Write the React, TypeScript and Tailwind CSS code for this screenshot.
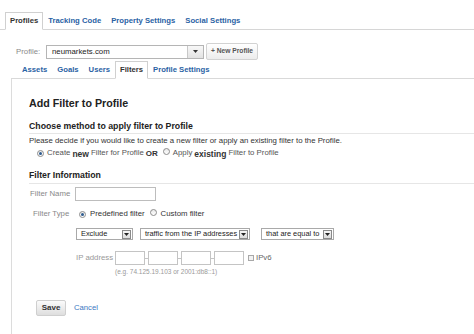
import React from "react";

const font = "font-['Liberation_Sans',Arial,sans-serif]";

const Radio = ({ checked = false }: { checked?: boolean }) => (
	<span className="inline-flex h-[7px] w-[7px] shrink-0 items-center justify-center rounded-full border border-[#8c8c8c] bg-gradient-to-b from-[#e9e9e9] to-white">
		{checked && <span className="h-[3px] w-[3px] rounded-full bg-[#2f5c8f]" />}
	</span>
);

const Arrow = () => (
	<span className="mr-[1px] flex h-[9px] w-[9px] shrink-0 items-center justify-center border border-[#8a8a8a] bg-gradient-to-b from-[#f6f6f6] to-[#dcdcdc]">
		<svg width="5" height="3" viewBox="0 0 5 3">
			<path d="M0 0h5L2.5 3z" fill="#222" />
		</svg>
	</span>
);

const Select = ({ label, width }: { label: string; width: string }) => (
	<div className={`flex h-[12px] items-center border border-[#a9a9a9] bg-white ${width}`}>
		<span className="flex-1 whitespace-nowrap pl-[4px] text-[7.4px] leading-[10px] text-[#222]">{label}</span>
		<Arrow />
	</div>
);

const TopTab = ({ label, active = false }: { label: string; active?: boolean }) => (
	<div
		className={
			active
				? "-mb-px h-[18px] border border-[#d0d0d0] border-b-white bg-white px-[4px] text-[7.7px] font-bold leading-[16px] text-[#333]"
				: "-mb-px h-[18px] border border-transparent px-[4px] text-[7.7px] font-bold leading-[16px] text-[#2a62a4]"
		}
	>
		{label}
	</div>
);

const IpBox = () => <div className="h-[14px] w-[30px] border border-[#c4c4c4] bg-white" />;
const Dash = () => <div className="h-px w-[3px] bg-[#c4c4c4]" />;

export default function App() {
	return (
		<div className={`h-[334px] w-[474px] overflow-hidden bg-white text-[#333] ${font}`}>
			{/* account tabs */}
			<div className="flex h-[30px] items-end border-b border-[#d6d6d6] pl-[5px]">
				<TopTab label="Profiles" active />
				<TopTab label="Tracking Code" />
				<TopTab label="Property Settings" />
				<TopTab label="Social Settings" />
			</div>

			{/* profile picker */}
			<div className="mt-[13px] flex h-[17px] items-center pl-[16px]">
				<span className="w-[30px] text-[7.8px] text-[#8a8a8a]">Profile:</span>
				<div className="flex h-[14px] w-[158px] border border-[#b5b5b5] bg-white">
					<span className="flex-1 pl-[5px] text-[7.8px] leading-[12px] text-[#222]">neumarkets.com</span>
					<span className="flex w-[16px] items-center justify-center border-l border-[#c8c8c8] bg-gradient-to-b from-[#f8f8f8] to-[#e2e2e2]">
						<svg width="5" height="3" viewBox="0 0 5 3">
							<path d="M0 0h5L2.5 3z" fill="#333" />
						</svg>
					</span>
				</div>
				<div className="ml-[2px] flex h-[17px] w-[52px] items-center justify-center rounded-[2px] border border-[#d2d2d2] bg-gradient-to-b from-white to-[#ececec] text-[6.7px] font-bold text-[#555]">
					+ New Profile
				</div>
			</div>

			{/* profile tabs */}
			<div className="ml-[11px] flex h-[19px] items-end border-b border-[#d9d9d9] pl-[6px]">
				<TopTab label="Assets" />
				<TopTab label="Goals" />
				<TopTab label="Users" />
				<TopTab label="Filters" active />
				<TopTab label="Profile Settings" />
			</div>

			{/* panel */}
			<div className="ml-[11px] h-[260px] border-l border-[#dcdcdc] pl-[17px]">
				<h1 className="pt-[17px] text-[10.7px] font-bold leading-[14px] text-[#222]">Add Filter to Profile</h1>

				<div className="mt-[11px] border-b border-[#e6e6e6] pb-[1px] text-[8.75px] font-bold leading-[11px] text-[#222]">
					Choose method to apply filter to Profile
				</div>
				<p className="mt-[2px] text-[7.8px] leading-[10px] text-[#333]">
					Please decide if you would like to create a new filter or apply an existing filter to the Profile.
				</p>
				<div className="mt-[1px] flex h-[12px] items-center pl-[8px] text-[7.8px] text-[#555]">
					<Radio checked />
					<span className="ml-[3px]">Create</span>
					<span className="ml-[2px] translate-y-[1px] text-[8.5px] font-bold text-[#333]">new</span>
					<span className="ml-[2px]">Filter for Profile</span>
					<span className="ml-[2px] translate-y-[1px] text-[8px] font-bold text-[#333]">OR</span>
					<span className="ml-[5px]">
						<Radio />
					</span>
					<span className="ml-[3px]">Apply</span>
					<span className="ml-[2px] translate-y-[1px] text-[8.5px] font-bold text-[#333]">existing</span>
					<span className="ml-[2px]">Filter to Profile</span>
				</div>

				<div className="mt-[11px] border-b border-[#e6e6e6] pb-[2px] text-[8.75px] font-bold leading-[11px] text-[#222]">
					Filter Information
				</div>

				<div className="mt-[3px] flex h-[14px] items-center pl-[1px]">
					<span className="w-[45px] text-[7.8px] text-[#888]">Filter Name</span>
					<div className="h-[14px] w-[81px] border border-[#bdbdbd] bg-white" />
				</div>

				<div className="mt-[7px] flex h-[12px] items-center pl-[4px] text-[7.8px]">
					<span className="w-[46px] text-[#888]">Filter Type</span>
					<Radio checked />
					<span className="ml-[4px] text-[#333]">Predefined filter</span>
					<span className="ml-[5px]">
						<Radio />
					</span>
					<span className="ml-[4px] text-[#333]">Custom filter</span>
				</div>

				<div className="ml-[47px] mt-[8px] flex items-center">
					<Select label="Exclude" width="w-[57px]" />
					<div className="ml-[7px]">
						<Select label="traffic from the IP addresses" width="w-[110px]" />
					</div>
					<div className="ml-[11px]">
						<Select label="that are equal to" width="w-[73px]" />
					</div>
				</div>

				<div className="ml-[47px] mt-[11px] flex h-[14px] items-center">
					<span className="w-[39px] text-[7.8px] text-[#999]">IP address</span>
					<IpBox />
					<Dash />
					<IpBox />
					<Dash />
					<IpBox />
					<Dash />
					<IpBox />
					<span className="ml-[4px] h-[6px] w-[6px] border border-[#a8a8a8] bg-[#f2f2f2]" />
					<span className="ml-[2px] text-[7.8px] text-[#666]">IPv6</span>
				</div>
				<div className="ml-[86px] mt-[2px] text-[6.5px] leading-[9px] text-[#999]">
					(e.g. 74.125.19.103 or 2001:db8::1)
				</div>

				<div className="ml-[7px] mt-[24px] flex items-center">
					<button className="flex h-[16px] w-[30px] items-center justify-center rounded-[2px] border border-[#cfcfcf] bg-gradient-to-b from-[#fbfbfb] to-[#dedede] text-[8px] font-bold text-[#333]">
						Save
					</button>
					<span className="ml-[8px] text-[7.7px] text-[#3a78c2]">Cancel</span>
				</div>
			</div>
		</div>
	);
}
